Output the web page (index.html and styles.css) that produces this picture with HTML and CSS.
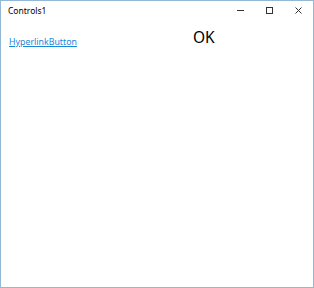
FILE: index.html
```html
<!DOCTYPE html>
<html lang="en">
<head>
    <meta charset="UTF-8">
    <title>Controls1</title>
    <link rel="stylesheet" href="styles.css">
</head>
<body>
    <div class="window">
        <div class="titlebar">
            <span class="title">Controls1</span>
            <div class="caption-buttons">
                <span class="caption-btn">
                    <svg width="7" height="7" viewBox="0 0 7 7"><path d="M0 3.5h7" stroke="#333" stroke-width="1"/></svg>
                </span>
                <span class="caption-btn">
                    <svg width="7" height="7" viewBox="0 0 7 7"><rect x="0.5" y="0.5" width="6" height="6" fill="none" stroke="#333" stroke-width="1"/></svg>
                </span>
                <span class="caption-btn">
                    <svg width="7" height="7" viewBox="0 0 7 7"><path d="M0.5 0.5l6 6M6.5 0.5l-6 6" stroke="#333" stroke-width="1"/></svg>
                </span>
            </div>
        </div>
        <div class="content">
            <a href="#" class="hyperlink">HyperlinkButton</a>
            <span class="ok">OK</span>
        </div>
    </div>
</body>
</html>
```

FILE: styles.css
```css
html, body {
    margin: 0;
    height: 100%;
}
body {
    background: #fff;
    font-family: "Noto Sans", "Open Sans", sans-serif;
}
.window {
    box-sizing: border-box;
    height: 100%;
    border: 1px solid #93b8d6;
    display: flex;
    flex-direction: column;
}
.titlebar {
    display: flex;
    align-items: center;
    justify-content: space-between;
    height: 18px;
    padding-left: 7px;
}
.title {
    font-size: 8.5px;
    color: #000;
}
.caption-buttons {
    display: flex;
}
.caption-btn {
    display: flex;
    align-items: center;
    justify-content: center;
    width: 29px;
    height: 18px;
}
.content {
    display: flex;
    align-items: flex-start;
    padding-left: 8px;
}
.hyperlink {
    margin-top: 17px;
    font-size: 8.8px;
    color: #1a86d6;
    text-decoration: underline;
}
.ok {
    margin-top: 7px;
    margin-left: 116px;
    font-size: 15.5px;
    color: #000;
}
```
